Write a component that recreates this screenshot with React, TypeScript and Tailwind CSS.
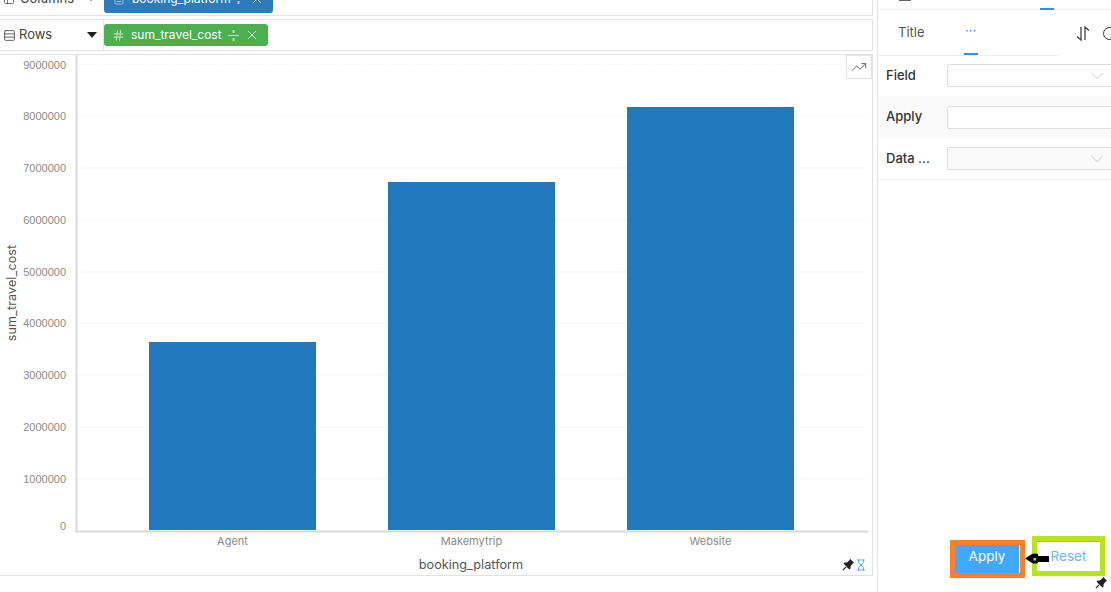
import React from "react";
import { ChevronDown, Hash, Table2, Rows3, X, Hourglass, TrendingUp, FileText } from "lucide-react";

const ticks = [
  { label: "9000000", y: 65 },
  { label: "8000000", y: 116 },
  { label: "7000000", y: 168 },
  { label: "6000000", y: 220 },
  { label: "5000000", y: 272 },
  { label: "4000000", y: 323 },
  { label: "3000000", y: 375 },
  { label: "2000000", y: 427 },
  { label: "1000000", y: 479 },
  { label: "0", y: 526 },
];

const bars = [
  { name: "Agent", x: 149, top: 342 },
  { name: "Makemytrip", x: 388, top: 182 },
  { name: "Website", x: 627, top: 107 },
];

function SplitIcon() {
  return (
    <svg width="11" height="13" viewBox="0 0 11 13" className="shrink-0 opacity-60">
      <path d="M0 6.5h11" stroke="currentColor" strokeWidth="1.2" />
      <path d="M5.5 1v3M5.5 9v3" stroke="currentColor" strokeWidth="2" />
    </svg>
  );
}

function PinIcon({ className }: { className?: string }) {
  return (
    <svg width="13" height="13" viewBox="0 0 16 16" className={className}>
      <path d="M10 1 L15 6 L13.5 6.5 L10.5 10 L10.5 13 L9 14 L2 7 L3 5.5 L6 5.5 L9.5 2.5 Z" fill="#222222" />
      <path d="M5 11 L1 15" stroke="#222222" strokeWidth="1.5" />
    </svg>
  );
}

function Chart() {
  // coordinates are page coordinates, the frame starts at y=54
  return (
    <svg width="871" height="520" viewBox="0 55 871 520" className="block">
      {ticks.slice(1, -1).map((t) => (
        <line key={t.y} x1="77" x2="865" y1={t.y} y2={t.y} stroke="#f4f4f4" />
      ))}
      <line x1="77" x2="845" y1="64.5" y2="64.5" stroke="#eeeeee" strokeDasharray="1 2" />
      {bars.map((b) => (
        <g key={b.name}>
          <rect x={b.x} y={b.top} width="167" height={530 - b.top} fill="#2279bd" />
          <text x={b.x + 83.5} y="545" textAnchor="middle" fontSize="11" fill="#8a8a8a">
            {b.name}
          </text>
        </g>
      ))}
      <g className="font-['Liberation_Sans']">
        {ticks.map((t) => (
          <text key={t.label} x="66" y={t.y + 4} textAnchor="end" fontSize="11" fill="#8f8a84">
            {t.label}
          </text>
        ))}
      </g>
      <line x1="76.5" x2="76.5" y1="55" y2="532" stroke="#d9d9d9" strokeWidth="2" />
      <line x1="75" x2="868" y1="531.5" y2="531.5" stroke="#d9d9d9" strokeWidth="2" />
      <text x="471" y="569" textAnchor="middle" fontSize="12.7" fill="#555555">
        booking_platform
      </text>
      <text transform="translate(16 293) rotate(-90)" textAnchor="middle" fontSize="12.5" letterSpacing="0.15" fill="#555555">
        sum_travel_cost
      </text>
    </svg>
  );
}

export default function App() {
  return (
    <div
      className="relative flex h-[592px] w-[1111px] overflow-hidden bg-white text-[#444444]"
      style={{ fontFamily: '"Inter", "Liberation Sans", sans-serif' }}
    >
      {/* Left: shelves and chart */}
      <div className="flex w-[873px] shrink-0 flex-col">
        <div className="-mt-[18px] flex h-[34px] shrink-0 items-center border-r border-b border-[#e2e2e2]">
          <div className="flex w-[104px] shrink-0 items-center gap-[5px] pl-[3px] text-[13px]">
            <Table2 size={12} strokeWidth={1.5} />
            <span>Columns</span>
            <span className="ml-[9px] h-0 w-0 border-x-[3px] border-t-[4px] border-x-transparent border-t-[#222222]" />
          </div>
          <div className="flex h-[28px] w-[169px] items-center rounded-[3px] bg-[#2f7ab8] pl-[9px] text-[12px] text-white">
            <FileText size={12} strokeWidth={1.5} className="opacity-70" />
            <span className="ml-[7px] w-[101px]">booking_platform</span>
            <SplitIcon />
            <X size={14} strokeWidth={1.5} className="ml-[6px]" />
          </div>
        </div>
        <div className="mt-[3px] flex h-[32px] shrink-0 items-center border-y border-r border-[#e2e2e2]">
          <div className="flex h-full w-[104px] shrink-0 items-center border-r border-[#e6e6e6] pl-[3px] text-[13px]">
            <Rows3 size={13} strokeWidth={1.5} />
            <span className="ml-[3px]">Rows</span>
            <span className="ml-[35px] h-0 w-0 border-x-[5px] border-t-[6px] border-x-transparent border-t-[#222222]" />
          </div>
          <div className="flex h-[22px] w-[164px] items-center rounded-[3px] bg-[#4cb050] pl-[8px] text-[12px] text-white">
            <Hash size={13} strokeWidth={2} className="opacity-60" />
            <span className="ml-[6px] w-[97px]">sum_travel_cost</span>
            <SplitIcon />
            <X size={14} strokeWidth={1.5} className="ml-[6px]" />
          </div>
        </div>
        <div className="relative mt-[3px] h-[522px] shrink-0 border-y border-r border-[#e2e2e2]">
          <Chart />
          <div className="absolute top-0 right-0 flex h-[24px] w-[26px] items-center justify-center border border-[#e2e2e2] bg-white">
            <TrendingUp size={16} strokeWidth={1.5} className="text-[#666666]" />
          </div>
          <div className="absolute right-[5px] bottom-[4px] flex items-center">
            <PinIcon />
            <Hourglass size={12} strokeWidth={1.75} className="text-[#3fa0f5]" />
          </div>
        </div>
      </div>

      {/* Right: settings panel */}
      <div className="ml-[4px] flex min-w-0 flex-1 flex-col border-l border-[#e6e6e6]">
        <div className="-mt-[8px] flex h-[18px] shrink-0 items-center border-b border-[#eeeeee] pb-[12px] pl-[21px] text-[12px]">
          <span className="h-[12px] w-[12px] shrink-0 border border-[#666666] bg-[#999999]" />
          <span className="ml-[14px] leading-none">Visualization</span>
          <span className="absolute top-[8px] left-[1040px] h-[2px] w-[14px] bg-[#2196f3]" />
        </div>
        <div className="flex h-[46px] shrink-0 items-center">
          <div className="flex h-full w-[181px] shrink-0 items-center border-b border-[#eeeeee] text-[13px]">
            <span className="ml-[20px] text-[#555555]">Title</span>
            <span className="ml-[39px] flex h-full w-[14px] items-center justify-center border-b-2 border-[#2196f3] pb-[2px] text-[#2196f3]">
              ···
            </span>
          </div>
          <svg width="14" height="15" viewBox="0 0 14 15" className="ml-[17px] shrink-0 text-[#333333]" fill="none" stroke="currentColor" strokeWidth="1.2">
            <path d="M5 1v13L1 10.5" />
            <path d="M9 14V1l4 3.5" />
          </svg>
          <span className="ml-[13px] h-[13px] w-[13px] shrink-0 rounded-full border border-[#333333]" />
        </div>
        <div className="-mt-px flex h-[41px] shrink-0 items-center pl-[8px] text-[13px] font-medium text-[#333333]">
          <span className="w-[61px] shrink-0">Field</span>
          <div className="flex h-[23px] w-[175px] shrink-0 items-center rounded-[2px] border border-[#dddddd] pl-[139px]">
            <ChevronDown size={20} strokeWidth={0.75} className="text-[#aaaaaa]" />
          </div>
        </div>
        <div className="flex h-[42px] shrink-0 items-center bg-[#fafafa] pl-[8px] text-[13px] font-medium text-[#333333]">
          <span className="w-[61px] shrink-0">Apply</span>
          <div className="h-[23px] w-[175px] shrink-0 rounded-[2px] border border-[#dddddd] bg-white" />
        </div>
        <div className="flex h-[42px] shrink-0 items-center border-b border-[#eeeeee] pl-[8px] text-[13px] font-medium text-[#333333]">
          <span className="w-[61px] shrink-0">Data ...</span>
          <div className="flex h-[23px] w-[175px] shrink-0 items-center rounded-[2px] border border-[#dddddd] bg-[#fafafa] pl-[139px]">
            <ChevronDown size={20} strokeWidth={0.75} className="text-[#aaaaaa]" />
          </div>
        </div>
        <div className="flex flex-1 items-start gap-[7px] pt-[356px] pl-[72px]">
          <button className="mt-[4px] h-[38px] w-[75px] shrink-0 border-[5px] border-[#ff7f27] bg-[#3fa9ff] pr-[1px] pb-[6px] text-[13.5px] text-white shadow-[inset_-1px_0_0_#ffffff]">
            Apply
          </button>
          <button className="h-[40px] w-[73px] shrink-0 border-[5px] border-[#b5e61d] bg-white text-[13.5px] text-[#6fb4ff] shadow-[inset_0_1px_0_#7fb8f0]">
            Reset
          </button>
        </div>
      </div>

      {/* annotation arrow and pin over the buttons */}
      <svg width="25" height="11" viewBox="0 0 25 11" className="absolute top-[553px] left-[1025px]">
        <path d="M0 5.5 L7 1 Q10 0 13 1 V3 H24 V9 H13 V10 Q10 11 7 10 Z" fill="#000000" />
        <rect x="8.5" y="5" width="2.5" height="2.5" fill="#b5e61d" />
      </svg>
      <PinIcon className="absolute top-[576px] left-[1095px]" />
    </div>
  );
}
